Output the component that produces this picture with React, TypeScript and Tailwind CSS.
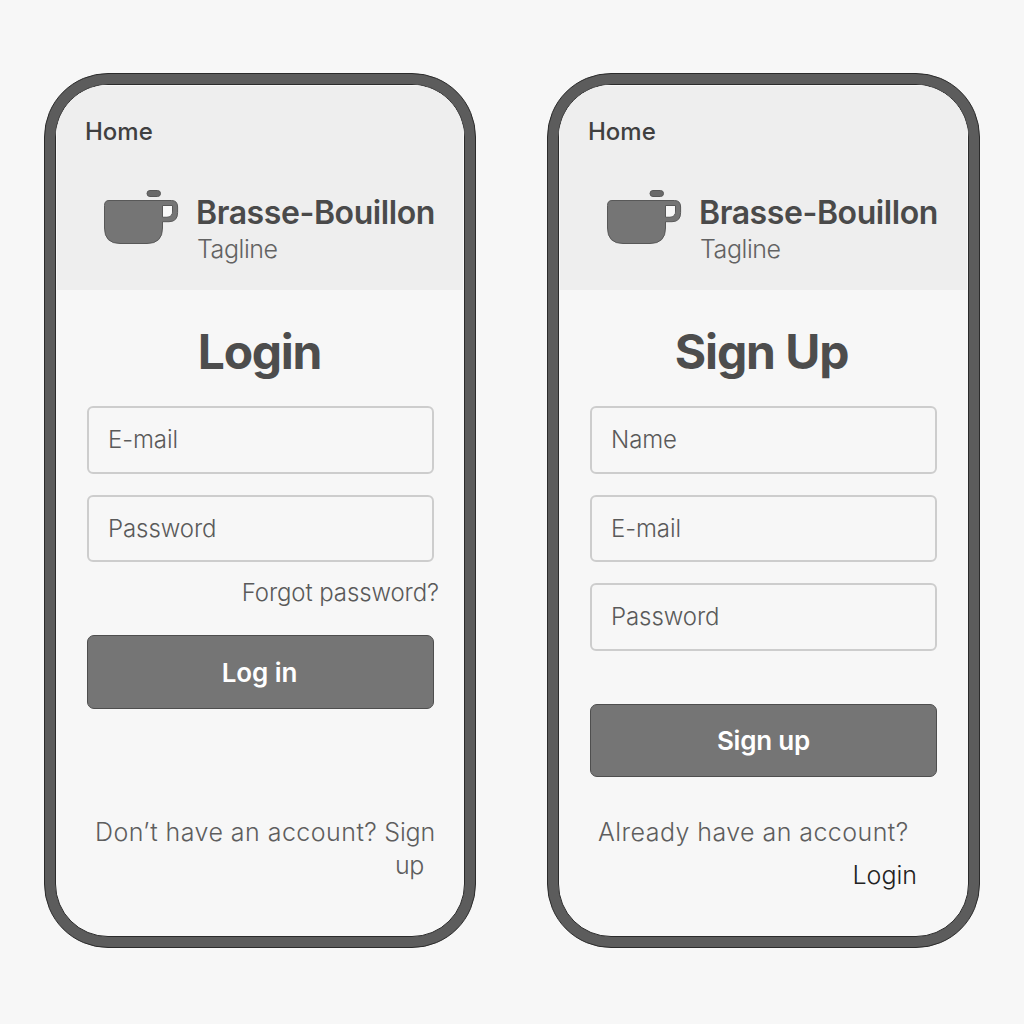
import type { ReactNode } from 'react';

function CupLogo() {
  return (
    <svg className="block h-[56px] w-[78px] shrink-0" viewBox="0 0 78 56" fill="#757575" stroke="#585858" strokeWidth="1">
      <rect x="45" y="1.5" width="13.5" height="6" rx="3" fill="#6a6a6a" />
      <path
        fillRule="evenodd"
        d="M7 11.5H69.5Q75.6 11.5 75.6 18V23.5Q75.6 32.7 67 32.7H60.500V39Q60.500 54.500 45 54.500H18Q2.500 54.500 2.500 39V16.500Q2.500 11.500 7 11.500ZM60.500 16.500V28H65Q70.500 28 70.500 22V16.500Z"
      />
      <path d="M61 17H70V22Q70 27.500 64.500 27.500H61Z" fill="#f8f8f8" stroke="none" />
    </svg>
  );
}

function Phone({ className, children }: { className: string; children: ReactNode }) {
  return (
    <div className={`h-[875px] shrink-0 rounded-[64px] border border-[#2b2b2b] bg-[#5c5c5c] p-[10px] ${className}`}>
      <div className="flex h-full flex-col overflow-hidden rounded-[53px] border border-[#2b2b2b] bg-[#f7f7f7]">
        <header className="h-[205px] shrink-0 border-x border-t border-[#f8f8f8] bg-[#eeeeee]">
          <div className="mt-[34px] ml-[28px] text-[24px] leading-none font-medium text-[#404040]">Home</div>
          <div className="mt-[45px] ml-[45px] flex">
            <CupLogo />
            <div className="ml-[16px] whitespace-nowrap">
              <div className="mt-[8px] text-[32px] leading-none font-[630] tracking-[-0.42px] text-[#4a4a4a]">Brasse-Bouillon</div>
              <div className="ml-[1px] mt-[8px] text-[25px] leading-none font-light tracking-[-0.45px] text-[#626262]">Tagline</div>
            </div>
          </div>
        </header>
        {children}
      </div>
    </div>
  );
}

function Field({ label }: { label: string }) {
  return (
    <div className="flex h-[67.5px] w-[347px] items-center rounded-[6px] border-2 border-[#cdcdcd] pt-px pl-[19px] text-[24px] leading-none font-light tracking-[-0.08px] text-[#5a5a5a]">
      {label}
    </div>
  );
}

export default function App() {
  return (
    <main className="flex h-[1024px] w-[1024px] gap-[71px] overflow-hidden bg-[#f7f7f7] pt-[73px] pl-[44px] font-['Inter',sans-serif]">
      <Phone className="w-[432px]">
        <section className="flex flex-col pr-[30px] pl-[31px]">
          <h1 className="mt-[38px] pr-[2px] text-center text-[48px] leading-none font-[650] tracking-[-1.3px] text-[#4d4d4d]">Login</h1>
          <div className="mt-[30px] flex flex-col gap-[21px]">
            <Field label="E-mail" />
            <Field label="Password" />
          </div>
          <a className="mt-[19px] mr-[-5px] text-right text-[24px] leading-none font-light tracking-[-0.1px] whitespace-nowrap text-[#5a5a5a]">Forgot password?</a>
          <button className="mt-[30px] h-[74px] rounded-[7px] border border-[#4e4e4e] bg-[#757575] pt-px pr-[2px] text-[26px] leading-none font-semibold tracking-[-0.1px] text-white">
            Log in
          </button>
          <p className="mt-[107px] ml-[8px] text-[25px] leading-[33px] font-light whitespace-nowrap text-[#5e5e5e]">
            <span className="tracking-[0.46px]">Don’t have an account?</span>
            <span className="ml-[7px] tracking-[-0.2px]">Sign</span>
            <span className="block pr-[10px] text-right tracking-[-0.4px]">up</span>
          </p>
        </section>
      </Phone>
      <Phone className="w-[433px]">
        <section className="flex flex-col pr-[31px] pl-[31px]">
          <h1 className="mt-[38px] pr-[4px] text-center text-[48px] leading-none font-[650] tracking-[-1.1px] text-[#4d4d4d]">Sign Up</h1>
          <div className="mt-[30px] flex flex-col gap-[21px]">
            <Field label="Name" />
            <Field label="E-mail" />
            <Field label="Password" />
          </div>
          <button className="mt-[53.5px] h-[73px] rounded-[7px] border border-[#4e4e4e] bg-[#757575] pt-px text-[26px] leading-none font-semibold tracking-[-0.2px] text-white">
            Sign up
          </button>
          <p className="mt-[43px] ml-[8px] text-[25px] leading-none font-light tracking-[0.44px] whitespace-nowrap text-[#5e5e5e]">Already have an account?</p>
          <a className="mt-[18px] pr-[20px] text-right text-[25px] leading-none font-light text-[#222222]">Login</a>
        </section>
      </Phone>
    </main>
  );
}
